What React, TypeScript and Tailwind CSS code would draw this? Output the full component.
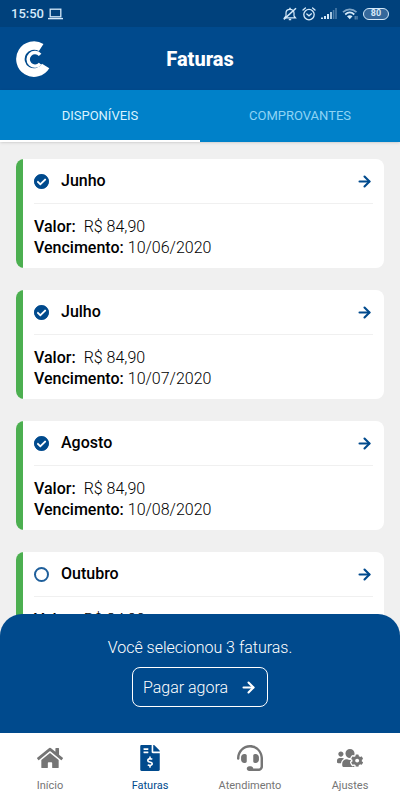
import { FC, useState } from "react";
import { ArrowRight } from "lucide-react";
import {
  FaCheckCircle,
  FaFileInvoiceDollar,
  FaHeadset,
  FaHome,
  FaUsersCog,
} from "react-icons/fa";

const invoices = [
  { month: "Junho", value: "R$ 84,90", due: "10/06/2020" },
  { month: "Julho", value: "R$ 84,90", due: "10/07/2020" },
  { month: "Agosto", value: "R$ 84,90", due: "10/08/2020" },
  { month: "Outubro", value: "R$ 84,90", due: "10/10/2020" },
];

const navItems = [
  { label: "Início", icon: FaHome, active: false },
  { label: "Faturas", icon: FaFileInvoiceDollar, active: true },
  { label: "Atendimento", icon: FaHeadset, active: false },
  { label: "Ajustes", icon: FaUsersCog, active: false },
];

const Logo: FC = () => (
  <svg
    viewBox="0 0 106 106"
    className="size-9"
    fill="none"
    stroke="white"
    aria-hidden="true"
  >
    <path d="M74.2 19.1A40 40 0 1 0 87.3 73.6" strokeWidth="25" />
    <path d="M71 41A20 20 0 1 0 71 67" strokeWidth="10" />
  </svg>
);

const LaptopIcon: FC = () => (
  <svg viewBox="0 0 15 12" className="h-3 w-[15px]" fill="none" stroke="currentColor" aria-hidden="true">
    <rect x="2.2" y="1.2" width="10.6" height="7.6" strokeWidth="1.3" />
    <path d="M0 10.6H15" strokeWidth="1.4" />
  </svg>
);

const BellOffIcon: FC = () => (
  <svg
    viewBox="0 0 14 14"
    className="size-[14px]"
    fill="none"
    stroke="currentColor"
    strokeWidth="1.2"
    aria-hidden="true"
  >
    <path d="M1.5 10.8H12.5L11 9V6C11 3.7 9.3 2.4 7 2.4S3 3.7 3 6V9Z" />
    <path d="M7 .8V2.4M5.8 12.6H8.2" strokeWidth="1.5" />
    <path d="M.8 12.4 13 1.2" strokeWidth="1.5" />
  </svg>
);

const AlarmIcon: FC = () => (
  <svg
    viewBox="0 0 14 14"
    className="size-[14px]"
    fill="none"
    stroke="currentColor"
    strokeWidth="1.3"
    strokeLinecap="round"
    aria-hidden="true"
  >
    <circle cx="7" cy="7.6" r="5.2" />
    <path d="M1 3 3.4 1M13 3 10.6 1M4.8 7 7 8.8 9.4 6.8" />
  </svg>
);

const SignalIcon: FC = () => (
  <svg viewBox="0 0 16 12" className="h-3 w-4" fill="currentColor" aria-hidden="true">
    <rect x="0" y="9.5" width="2" height="1.5" />
    <rect x="3" y="8" width="2" height="3" />
    <rect x="6" y="6" width="2" height="5" />
    <rect x="9" y="4" width="2" height="7" opacity="0.8" />
    <rect x="11.8" y="2" width="1.6" height="9" opacity="0.35" />
    <rect x="14.2" y="0" width="1.6" height="11" opacity="0.35" />
  </svg>
);

const WifiIcon: FC = () => (
  <svg viewBox="0 0 16 12" className="h-3 w-4" fill="none" aria-hidden="true">
    <g stroke="currentColor" strokeWidth="1.7">
      <path d="M1 4.2C5 .4 10.5 .4 14.5 4.2" opacity="0.6" />
      <path d="M3.2 6.5C6 4 9.5 4 12.3 6.5" />
    </g>
    <path d="M5 8.3C6.8 6.9 8.7 6.9 10.5 8.3L7.75 11.3Z" fill="currentColor" />
    <path d="M13.2 8v3.5M15 8v3.5" stroke="currentColor" strokeWidth="0.8" opacity="0.7" />
  </svg>
);

const StatusBar: FC = () => (
  <div className="flex h-[27px] items-center bg-[#00417c] px-[11px] text-[#d5eafa]">
    <span className="text-[13px] font-medium">15:50</span>
    <span className="ml-1">
      <LaptopIcon />
    </span>
    <div className="ml-auto flex items-center gap-[5px]">
      <BellOffIcon />
      <AlarmIcon />
      <SignalIcon />
      <WifiIcon />
      <span className="flex h-3 w-[26px] items-center justify-center rounded-full border border-current bg-[#35689b] text-[9px] font-bold">
        80
      </span>
    </div>
  </div>
);

type InvoiceCardProps = {
  month: string;
  value: string;
  due: string;
  checked: boolean;
  onToggle: () => void;
};

const InvoiceCard: FC<InvoiceCardProps> = ({
  month,
  value,
  due,
  checked,
  onToggle,
}) => (
  <article className="flex shrink-0 overflow-hidden rounded-lg bg-white">
    <div className="w-[7px] bg-[#4caf50]" />
    <div className="flex-1 px-[11px] pb-[10px]">
      <div className="flex h-[45px] items-center justify-between border-b border-[#f0f0f0]">
        <label className="relative flex items-center gap-3 text-base font-medium">
          <input
            type="checkbox"
            className="size-[15px] appearance-none rounded-full border-2 border-[#1f5f9b]"
            checked={checked}
            onChange={onToggle}
          />
          {checked && (
            <FaCheckCircle
              size={15}
              className="pointer-events-none absolute left-0 text-[#004a8d]"
            />
          )}
          {month}
        </label>
        <button type="button" aria-label={`Abrir fatura de ${month}`}>
          <ArrowRight size={17} strokeWidth={3} className="text-[#004a8d]" />
        </button>
      </div>
      <dl className="pt-3 text-base leading-[21px]">
        <div className="flex gap-2">
          <dt className="font-medium">Valor:</dt>
          <dd className="font-light">{value}</dd>
        </div>
        <div className="flex gap-1">
          <dt className="font-medium">Vencimento:</dt>
          <dd className="font-light">{due}</dd>
        </div>
      </dl>
    </div>
  </article>
);

const App: FC = () => {
  const [selected, setSelected] = useState(["Junho", "Julho", "Agosto"]);

  const toggle = (month: string) =>
    setSelected((prev) =>
      prev.includes(month) ? prev.filter((m) => m !== month) : [...prev, month]
    );

  return (
    <div className="flex h-screen flex-col bg-[#f0f0f0] font-[Roboto,sans-serif] text-black">
      <StatusBar />
      <header className="grid h-[63px] grid-cols-[36px_1fr_36px] items-center bg-[#004a8d] px-4">
        <Logo />
        <h1 className="text-center text-xl font-extrabold text-white">
          Faturas
        </h1>
      </header>
      <div
        role="tablist"
        className="z-10 grid h-[52px] grid-cols-2 bg-[#0081c9] text-[13px] shadow-sm"
      >
        <button
          type="button"
          role="tab"
          aria-selected="true"
          className="border-b-2 border-white pt-[2px] text-[#d9f3ff]"
        >
          DISPONÍVEIS
        </button>
        <button
          type="button"
          role="tab"
          aria-selected="false"
          className="border-b-2 border-transparent pt-[2px] text-[#8ed4f5]"
        >
          COMPROVANTES
        </button>
      </div>

      <div className="relative min-h-0 flex-1">
        <main className="flex h-full flex-col gap-[22px] overflow-y-auto px-4 pt-[17px] pb-36 [scrollbar-width:none]">
          {invoices.map((invoice) => (
            <InvoiceCard
              key={invoice.month}
              {...invoice}
              checked={selected.includes(invoice.month)}
              onToggle={() => toggle(invoice.month)}
            />
          ))}
        </main>
        <section className="absolute inset-x-0 bottom-0 flex flex-col items-center gap-2 rounded-t-[22px] bg-[#004a8d] pt-[22px] pb-[26px] text-base leading-[23px] text-white">
          <p className="font-light">Você selecionou {selected.length} faturas.</p>
          <button
            type="button"
            className="flex h-10 items-center gap-3 rounded-lg border border-white px-[10px] font-light"
          >
            Pagar agora
            <ArrowRight size={17} strokeWidth={3} />
          </button>
        </section>
      </div>

      <nav className="grid h-[67px] grid-cols-4 bg-white text-[11px]">
        {navItems.map(({ label, icon: Icon, active }) => (
          <a
            key={label}
            href="#"
            className={`flex flex-col items-center gap-[7px] pt-3 ${
              active ? "text-[#004a8d]" : "text-[#757575]"
            }`}
          >
            <Icon size={26} />
            {label}
          </a>
        ))}
      </nav>
    </div>
  );
};
export default App;
